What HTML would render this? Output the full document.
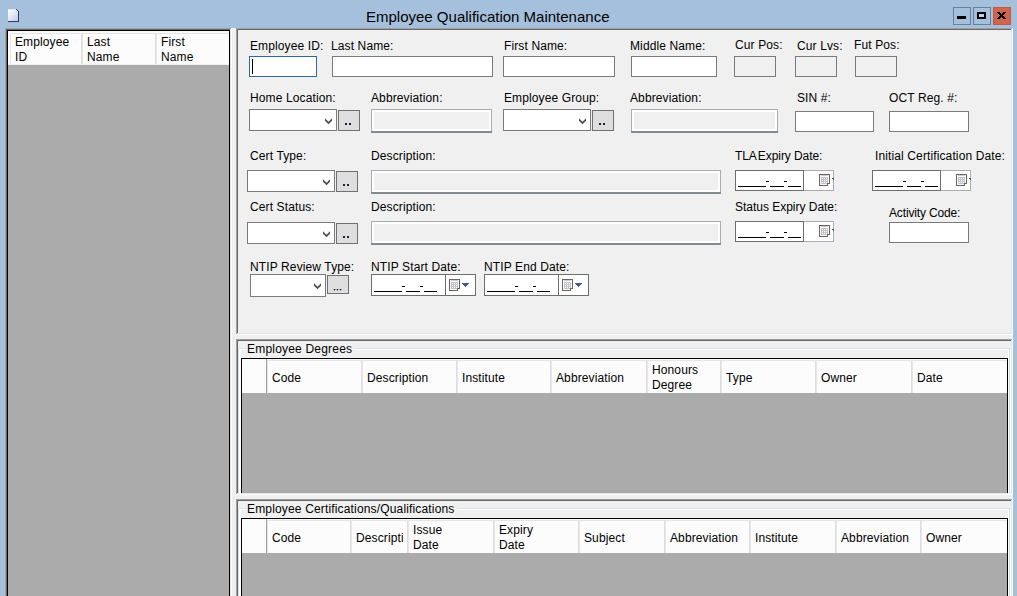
<!DOCTYPE html><html><head><meta charset="utf-8"><style>
html,body{margin:0;padding:0;width:1017px;height:596px;overflow:hidden;background:#a5c0dc;font-family:"Liberation Sans", sans-serif;}
.t{position:absolute;white-space:nowrap;line-height:14px;letter-spacing:0.12px;}
</style></head><body>
<div class="t" style="left:366px;top:7.5px;font-size:15px;line-height:18px;color:#000;letter-spacing:0">Employee Qualification Maintenance</div>
<svg style="position:absolute;left:8px;top:9px" width="11" height="13" shape-rendering="crispEdges"><defs><linearGradient id="pg" x1="0" y1="0" x2="1" y2="1"><stop offset="0" stop-color="#ffffff"/><stop offset="1" stop-color="#c3caee"/></linearGradient></defs><rect x="0" y="0" width="9" height="1" fill="#dfe8f4"/><rect x="0" y="1" width="10" height="11" fill="url(#pg)"/><rect x="10" y="2" width="1" height="11" fill="#283c5c"/><rect x="0" y="12" width="11" height="1" fill="#283c5c"/><rect x="9" y="0" width="2" height="1" fill="#a5c0dc"/><rect x="10" y="1" width="1" height="1" fill="#a5c0dc"/><rect x="8" y="0" width="1" height="1" fill="#3a4e70"/><rect x="9" y="1" width="1" height="1" fill="#283c5c"/><rect x="8" y="1" width="1" height="1" fill="#ffffff"/></svg>
<div style="position:absolute;left:953px;top:7px;width:18px;height:18px;box-sizing:border-box;border:1px solid #6b7f99;background:#a5c0dc"></div>
<div style="position:absolute;left:973px;top:7px;width:18px;height:18px;box-sizing:border-box;border:1px solid #6b7f99;background:#a5c0dc"></div>
<div style="position:absolute;left:957px;top:16px;width:9px;height:3px;background:#000"></div>
<div style="position:absolute;left:977px;top:12px;width:9px;height:7px;box-sizing:border-box;border:2px solid #000;background:#bcd2ec"></div>
<div style="position:absolute;left:993px;top:7px;width:18px;height:18px;box-sizing:border-box;border:1px solid #c9553c;background:#d0654f"></div>
<svg style="position:absolute;left:997px;top:12px" width="9" height="7" shape-rendering="crispEdges" fill="#000"><rect x="0" y="0" width="3" height="1"/><rect x="6" y="0" width="3" height="1"/><rect x="1" y="1" width="3" height="1"/><rect x="5" y="1" width="3" height="1"/><rect x="2" y="2" width="5" height="1"/><rect x="3" y="3" width="3" height="1"/><rect x="2" y="4" width="5" height="1"/><rect x="1" y="5" width="3" height="1"/><rect x="5" y="5" width="3" height="1"/><rect x="0" y="6" width="3" height="1"/><rect x="6" y="6" width="3" height="1"/></svg>
<div style="position:absolute;left:5px;top:28px;width:1008px;height:568px;background:#f0f0f0"></div>
<div style="position:absolute;left:5px;top:28px;width:227px;height:593px;background:#fff"></div>
<div style="position:absolute;left:5px;top:28px;width:226px;height:592px;background:#a0a0a0"></div>
<div style="position:absolute;left:6px;top:29px;width:225px;height:591px;background:#e3e3e3"></div>
<div style="position:absolute;left:6px;top:29px;width:224px;height:590px;background:#696969"></div>
<div style="position:absolute;left:7px;top:30px;width:223px;height:589px;background:#000"></div>
<div style="position:absolute;left:8px;top:31px;width:221px;height:565px;background:#ababab"></div>
<div style="position:absolute;left:8px;top:31px;width:221px;height:34px;background:#fafafa"></div>
<div style="position:absolute;left:10px;top:33px;width:219px;height:31px;background:#e5e5e5"></div>
<div style="position:absolute;left:11px;top:34px;width:218px;height:30px;background:#fcfcfc"></div>
<div style="position:absolute;left:8px;top:64px;width:221px;height:1px;background:#f0f0f0"></div>
<div style="position:absolute;left:81px;top:34px;width:1px;height:30px;background:#dedede"></div>
<div style="position:absolute;left:82px;top:34px;width:1px;height:30px;background:#e6e6e6"></div>
<div style="position:absolute;left:155px;top:34px;width:1px;height:30px;background:#dedede"></div>
<div style="position:absolute;left:156px;top:34px;width:1px;height:30px;background:#e6e6e6"></div>
<div class="t" style="left:15px;top:35px;font-size:12px;color:#000;line-height:15px">Employee<br>ID</div>
<div class="t" style="left:87px;top:35px;font-size:12px;color:#000;line-height:15px">Last<br>Name</div>
<div class="t" style="left:161px;top:35px;font-size:12px;color:#000;line-height:15px">First<br>Name</div>
<div style="position:absolute;left:236px;top:28px;width:777px;height:307px;background:#fff"></div>
<div style="position:absolute;left:236px;top:28px;width:776px;height:306px;background:#a0a0a0"></div>
<div style="position:absolute;left:237px;top:29px;width:775px;height:305px;background:#e3e3e3"></div>
<div style="position:absolute;left:237px;top:29px;width:774px;height:304px;background:#696969"></div>
<div style="position:absolute;left:238px;top:30px;width:773px;height:303px;background:#f0f0f0"></div>
<div class="t" style="left:250px;top:39px;font-size:12px;color:#000;">Employee ID:</div>
<div class="t" style="left:331px;top:39px;font-size:12px;color:#000;">Last Name:</div>
<div class="t" style="left:504px;top:39px;font-size:12px;color:#000;">First Name:</div>
<div class="t" style="left:630px;top:39px;font-size:12px;color:#000;">Middle Name:</div>
<div class="t" style="left:735px;top:38px;font-size:12px;color:#000;">Cur Pos:</div>
<div class="t" style="left:797px;top:39px;font-size:12px;color:#000;">Cur Lvs:</div>
<div class="t" style="left:854px;top:38px;font-size:12px;color:#000;">Fut Pos:</div>
<div class="t" style="left:250px;top:91px;font-size:12px;color:#000;">Home Location:</div>
<div class="t" style="left:371px;top:91px;font-size:12px;color:#000;">Abbreviation:</div>
<div class="t" style="left:504px;top:91px;font-size:12px;color:#000;">Employee Group:</div>
<div class="t" style="left:630px;top:91px;font-size:12px;color:#000;">Abbreviation:</div>
<div class="t" style="left:797px;top:91px;font-size:12px;color:#000;">SIN #:</div>
<div class="t" style="left:889px;top:91px;font-size:12px;color:#000;">OCT Reg. #:</div>
<div class="t" style="left:250px;top:149px;font-size:12px;color:#000;">Cert Type:</div>
<div class="t" style="left:371px;top:149px;font-size:12px;color:#000;">Description:</div>
<div class="t" style="left:735px;top:149px;font-size:12px;color:#000;"><span style="letter-spacing:-0.08px"><span style="word-spacing:-1.5px">TLA Expiry</span> Date:</span></div>
<div class="t" style="left:875px;top:149px;font-size:12px;color:#000;">Initial Certification Date:</div>
<div class="t" style="left:250px;top:200px;font-size:12px;color:#000;">Cert Status:</div>
<div class="t" style="left:371px;top:200px;font-size:12px;color:#000;">Description:</div>
<div class="t" style="left:735px;top:200px;font-size:12px;color:#000;"><span style="letter-spacing:-0.02px">Status Expiry Date:</span></div>
<div class="t" style="left:889px;top:206px;font-size:12px;color:#000;"><span style="letter-spacing:-0.15px">Activity Code:</span></div>
<div class="t" style="left:250px;top:260px;font-size:12px;color:#000;">NTIP Review Type:</div>
<div class="t" style="left:371px;top:260px;font-size:12px;color:#000;">NTIP Start Date:</div>
<div class="t" style="left:484px;top:260px;font-size:12px;color:#000;">NTIP End Date:</div>
<div style="position:absolute;left:249px;top:56px;width:68px;height:21px;box-sizing:border-box;border:1px solid #33669a;background:#fff"></div>
<div style="position:absolute;left:252px;top:59px;width:1px;height:15px;background:#000"></div>
<div style="position:absolute;left:332px;top:56px;width:161px;height:21px;box-sizing:border-box;border:1px solid #7a7a7a;background:#fff"></div>
<div style="position:absolute;left:503px;top:56px;width:112px;height:21px;box-sizing:border-box;border:1px solid #7a7a7a;background:#fff"></div>
<div style="position:absolute;left:631px;top:56px;width:86px;height:21px;box-sizing:border-box;border:1px solid #7a7a7a;background:#fff"></div>
<div style="position:absolute;left:734px;top:56px;width:42px;height:21px;box-sizing:border-box;border:1px solid #7a7a7a;background:#f0f0f0"></div>
<div style="position:absolute;left:795px;top:56px;width:42px;height:21px;box-sizing:border-box;border:1px solid #7a7a7a;background:#f0f0f0"></div>
<div style="position:absolute;left:855px;top:56px;width:42px;height:21px;box-sizing:border-box;border:1px solid #7a7a7a;background:#f0f0f0"></div>
<div style="position:absolute;left:249px;top:109px;width:88px;height:22px;box-sizing:border-box;border:1px solid #7a7a7a;background:#fff"></div>
<svg style="position:absolute;left:325px;top:118px" width="8" height="7" viewBox="0 0 8 7"><path d="M0 0.3 L3.5 3.8 L7 0.3 V2.8 L3.5 6.3 L0 2.8 Z" fill="#505050"/></svg>
<div style="position:absolute;left:338px;top:110px;width:22px;height:21px;box-sizing:border-box;border:1px solid #707070;background:#dedede"></div>
<div style="position:absolute;left:345px;top:123px;width:2px;height:2px;background:#202034"></div>
<div style="position:absolute;left:349px;top:123px;width:2px;height:2px;background:#202034"></div>
<div style="position:absolute;left:371px;top:109px;width:121px;height:24px;box-sizing:border-box;background:#a9adb2"></div>
<div style="position:absolute;left:372px;top:110px;width:119px;height:21px;background:#fff"></div>
<div style="position:absolute;left:374px;top:112px;width:115px;height:17px;background:#f0f0f0"></div>
<div style="position:absolute;left:371px;top:131px;width:121px;height:2px;background:#858a90"></div>
<div style="position:absolute;left:503px;top:109px;width:88px;height:22px;box-sizing:border-box;border:1px solid #7a7a7a;background:#fff"></div>
<svg style="position:absolute;left:579px;top:118px" width="8" height="7" viewBox="0 0 8 7"><path d="M0 0.3 L3.5 3.8 L7 0.3 V2.8 L3.5 6.3 L0 2.8 Z" fill="#505050"/></svg>
<div style="position:absolute;left:592px;top:110px;width:22px;height:21px;box-sizing:border-box;border:1px solid #707070;background:#dedede"></div>
<div style="position:absolute;left:599px;top:123px;width:2px;height:2px;background:#202034"></div>
<div style="position:absolute;left:603px;top:123px;width:2px;height:2px;background:#202034"></div>
<div style="position:absolute;left:631px;top:109px;width:147px;height:24px;box-sizing:border-box;background:#a9adb2"></div>
<div style="position:absolute;left:632px;top:110px;width:145px;height:21px;background:#fff"></div>
<div style="position:absolute;left:634px;top:112px;width:141px;height:17px;background:#f0f0f0"></div>
<div style="position:absolute;left:631px;top:131px;width:147px;height:2px;background:#858a90"></div>
<div style="position:absolute;left:795px;top:111px;width:79px;height:21px;box-sizing:border-box;border:1px solid #7a7a7a;background:#fff"></div>
<div style="position:absolute;left:889px;top:111px;width:80px;height:21px;box-sizing:border-box;border:1px solid #7a7a7a;background:#fff"></div>
<div style="position:absolute;left:247px;top:170px;width:88px;height:22px;box-sizing:border-box;border:1px solid #7a7a7a;background:#fff"></div>
<svg style="position:absolute;left:323px;top:179px" width="8" height="7" viewBox="0 0 8 7"><path d="M0 0.3 L3.5 3.8 L7 0.3 V2.8 L3.5 6.3 L0 2.8 Z" fill="#505050"/></svg>
<div style="position:absolute;left:336px;top:171px;width:22px;height:21px;box-sizing:border-box;border:1px solid #707070;background:#dedede"></div>
<div style="position:absolute;left:343px;top:184px;width:2px;height:2px;background:#202034"></div>
<div style="position:absolute;left:347px;top:184px;width:2px;height:2px;background:#202034"></div>
<div style="position:absolute;left:371px;top:170px;width:350px;height:24px;box-sizing:border-box;background:#a9adb2"></div>
<div style="position:absolute;left:372px;top:171px;width:348px;height:21px;background:#fff"></div>
<div style="position:absolute;left:374px;top:173px;width:344px;height:17px;background:#f0f0f0"></div>
<div style="position:absolute;left:371px;top:192px;width:350px;height:2px;background:#858a90"></div>
<div style="position:absolute;left:735px;top:170px;width:99px;height:21px;box-sizing:border-box;border:1px solid #a8aeb4;background:#fff"></div>
<div style="position:absolute;left:735px;top:170px;width:69px;height:21px;box-sizing:border-box;border:1px solid #6d6d6d;background:#fff"></div>
<div style="position:absolute;left:738px;top:186px;width:28px;height:1px;background:#000"></div>
<div style="position:absolute;left:766px;top:181px;width:3px;height:1px;background:#000"></div>
<div style="position:absolute;left:770px;top:186px;width:14px;height:1px;background:#000"></div>
<div style="position:absolute;left:784px;top:181px;width:3px;height:1px;background:#000"></div>
<div style="position:absolute;left:788px;top:186px;width:13px;height:1px;background:#000"></div>
<svg style="position:absolute;left:819px;top:174px" width="11" height="12" shape-rendering="crispEdges"><rect x="1" y="1" width="9" height="10" fill="#fff"/><rect x="2" y="1" width="7" height="1" fill="#c8ccd6"/><rect x="2" y="3" width="7" height="7" fill="#c0c4ce"/><rect x="3" y="4" width="1" height="1" fill="#fff"/><rect x="5" y="4" width="1" height="1" fill="#fff"/><rect x="7" y="4" width="1" height="1" fill="#fff"/><rect x="3" y="6" width="1" height="1" fill="#fff"/><rect x="5" y="6" width="1" height="1" fill="#fff"/><rect x="7" y="6" width="1" height="1" fill="#fff"/><rect x="3" y="8" width="1" height="1" fill="#fff"/><rect x="5" y="8" width="1" height="1" fill="#fff"/><rect x="7" y="8" width="1" height="1" fill="#fff"/><rect x="0" y="0" width="11" height="1" fill="#736158"/><rect x="0" y="0" width="1" height="12" fill="#736158"/><rect x="10" y="0" width="1" height="10" fill="#736158"/><rect x="8" y="9" width="3" height="1" fill="#736158"/><rect x="8" y="9" width="1" height="3" fill="#736158"/><rect x="0" y="11" width="9" height="1" fill="#736158"/><rect x="9" y="10" width="2" height="2" fill="#fff"/></svg>
<svg style="position:absolute;left:832px;top:178px" width="2" height="4" shape-rendering="crispEdges"><rect x="0" y="0" width="7" height="1" fill="#3c5a8a"/><rect x="1" y="1" width="5" height="1" fill="#3c5a8a"/><rect x="2" y="2" width="3" height="1" fill="#3c5a8a"/><rect x="3" y="3" width="1" height="1" fill="#3c5a8a"/></svg>
<div style="position:absolute;left:872px;top:170px;width:99px;height:21px;box-sizing:border-box;border:1px solid #a8aeb4;background:#fff"></div>
<div style="position:absolute;left:872px;top:170px;width:69px;height:21px;box-sizing:border-box;border:1px solid #6d6d6d;background:#fff"></div>
<div style="position:absolute;left:875px;top:186px;width:28px;height:1px;background:#000"></div>
<div style="position:absolute;left:903px;top:181px;width:3px;height:1px;background:#000"></div>
<div style="position:absolute;left:907px;top:186px;width:14px;height:1px;background:#000"></div>
<div style="position:absolute;left:921px;top:181px;width:3px;height:1px;background:#000"></div>
<div style="position:absolute;left:925px;top:186px;width:13px;height:1px;background:#000"></div>
<svg style="position:absolute;left:956px;top:174px" width="11" height="12" shape-rendering="crispEdges"><rect x="1" y="1" width="9" height="10" fill="#fff"/><rect x="2" y="1" width="7" height="1" fill="#c8ccd6"/><rect x="2" y="3" width="7" height="7" fill="#c0c4ce"/><rect x="3" y="4" width="1" height="1" fill="#fff"/><rect x="5" y="4" width="1" height="1" fill="#fff"/><rect x="7" y="4" width="1" height="1" fill="#fff"/><rect x="3" y="6" width="1" height="1" fill="#fff"/><rect x="5" y="6" width="1" height="1" fill="#fff"/><rect x="7" y="6" width="1" height="1" fill="#fff"/><rect x="3" y="8" width="1" height="1" fill="#fff"/><rect x="5" y="8" width="1" height="1" fill="#fff"/><rect x="7" y="8" width="1" height="1" fill="#fff"/><rect x="0" y="0" width="11" height="1" fill="#736158"/><rect x="0" y="0" width="1" height="12" fill="#736158"/><rect x="10" y="0" width="1" height="10" fill="#736158"/><rect x="8" y="9" width="3" height="1" fill="#736158"/><rect x="8" y="9" width="1" height="3" fill="#736158"/><rect x="0" y="11" width="9" height="1" fill="#736158"/><rect x="9" y="10" width="2" height="2" fill="#fff"/></svg>
<svg style="position:absolute;left:969px;top:178px" width="2" height="4" shape-rendering="crispEdges"><rect x="0" y="0" width="7" height="1" fill="#3c5a8a"/><rect x="1" y="1" width="5" height="1" fill="#3c5a8a"/><rect x="2" y="2" width="3" height="1" fill="#3c5a8a"/><rect x="3" y="3" width="1" height="1" fill="#3c5a8a"/></svg>
<div style="position:absolute;left:247px;top:222px;width:88px;height:22px;box-sizing:border-box;border:1px solid #7a7a7a;background:#fff"></div>
<svg style="position:absolute;left:323px;top:231px" width="8" height="7" viewBox="0 0 8 7"><path d="M0 0.3 L3.5 3.8 L7 0.3 V2.8 L3.5 6.3 L0 2.8 Z" fill="#505050"/></svg>
<div style="position:absolute;left:336px;top:223px;width:22px;height:21px;box-sizing:border-box;border:1px solid #707070;background:#dedede"></div>
<div style="position:absolute;left:343px;top:236px;width:2px;height:2px;background:#202034"></div>
<div style="position:absolute;left:347px;top:236px;width:2px;height:2px;background:#202034"></div>
<div style="position:absolute;left:371px;top:221px;width:350px;height:24px;box-sizing:border-box;background:#a9adb2"></div>
<div style="position:absolute;left:372px;top:222px;width:348px;height:21px;background:#fff"></div>
<div style="position:absolute;left:374px;top:224px;width:344px;height:17px;background:#f0f0f0"></div>
<div style="position:absolute;left:371px;top:243px;width:350px;height:2px;background:#858a90"></div>
<div style="position:absolute;left:735px;top:221px;width:99px;height:21px;box-sizing:border-box;border:1px solid #a8aeb4;background:#fff"></div>
<div style="position:absolute;left:735px;top:221px;width:69px;height:21px;box-sizing:border-box;border:1px solid #6d6d6d;background:#fff"></div>
<div style="position:absolute;left:738px;top:237px;width:28px;height:1px;background:#000"></div>
<div style="position:absolute;left:766px;top:232px;width:3px;height:1px;background:#000"></div>
<div style="position:absolute;left:770px;top:237px;width:14px;height:1px;background:#000"></div>
<div style="position:absolute;left:784px;top:232px;width:3px;height:1px;background:#000"></div>
<div style="position:absolute;left:788px;top:237px;width:13px;height:1px;background:#000"></div>
<svg style="position:absolute;left:819px;top:225px" width="11" height="12" shape-rendering="crispEdges"><rect x="1" y="1" width="9" height="10" fill="#fff"/><rect x="2" y="1" width="7" height="1" fill="#c8ccd6"/><rect x="2" y="3" width="7" height="7" fill="#c0c4ce"/><rect x="3" y="4" width="1" height="1" fill="#fff"/><rect x="5" y="4" width="1" height="1" fill="#fff"/><rect x="7" y="4" width="1" height="1" fill="#fff"/><rect x="3" y="6" width="1" height="1" fill="#fff"/><rect x="5" y="6" width="1" height="1" fill="#fff"/><rect x="7" y="6" width="1" height="1" fill="#fff"/><rect x="3" y="8" width="1" height="1" fill="#fff"/><rect x="5" y="8" width="1" height="1" fill="#fff"/><rect x="7" y="8" width="1" height="1" fill="#fff"/><rect x="0" y="0" width="11" height="1" fill="#736158"/><rect x="0" y="0" width="1" height="12" fill="#736158"/><rect x="10" y="0" width="1" height="10" fill="#736158"/><rect x="8" y="9" width="3" height="1" fill="#736158"/><rect x="8" y="9" width="1" height="3" fill="#736158"/><rect x="0" y="11" width="9" height="1" fill="#736158"/><rect x="9" y="10" width="2" height="2" fill="#fff"/></svg>
<svg style="position:absolute;left:832px;top:229px" width="2" height="4" shape-rendering="crispEdges"><rect x="0" y="0" width="7" height="1" fill="#3c5a8a"/><rect x="1" y="1" width="5" height="1" fill="#3c5a8a"/><rect x="2" y="2" width="3" height="1" fill="#3c5a8a"/><rect x="3" y="3" width="1" height="1" fill="#3c5a8a"/></svg>
<div style="position:absolute;left:889px;top:222px;width:80px;height:21px;box-sizing:border-box;border:1px solid #7a7a7a;background:#fff"></div>
<div style="position:absolute;left:250px;top:274px;width:76px;height:23px;box-sizing:border-box;border:1px solid #7a7a7a;background:#fff"></div>
<svg style="position:absolute;left:314px;top:283px" width="8" height="7" viewBox="0 0 8 7"><path d="M0 0.3 L3.5 3.8 L7 0.3 V2.8 L3.5 6.3 L0 2.8 Z" fill="#505050"/></svg>
<div style="position:absolute;left:327px;top:275px;width:22px;height:19px;box-sizing:border-box;border:1px solid #707070;background:#dedede"></div>
<div style="position:absolute;left:334px;top:289px;width:1px;height:1px;background:#1a1a3a"></div>
<div style="position:absolute;left:333px;top:289px;width:1px;height:1px;background:#b0a090"></div>
<div style="position:absolute;left:335px;top:289px;width:1px;height:1px;background:#90a8c0"></div>
<div style="position:absolute;left:334px;top:290px;width:1px;height:1px;background:#9090a0"></div>
<div style="position:absolute;left:337px;top:289px;width:1px;height:1px;background:#1a1a3a"></div>
<div style="position:absolute;left:336px;top:289px;width:1px;height:1px;background:#b0a090"></div>
<div style="position:absolute;left:338px;top:289px;width:1px;height:1px;background:#90a8c0"></div>
<div style="position:absolute;left:337px;top:290px;width:1px;height:1px;background:#9090a0"></div>
<div style="position:absolute;left:340px;top:289px;width:1px;height:1px;background:#1a1a3a"></div>
<div style="position:absolute;left:339px;top:289px;width:1px;height:1px;background:#b0a090"></div>
<div style="position:absolute;left:341px;top:289px;width:1px;height:1px;background:#90a8c0"></div>
<div style="position:absolute;left:340px;top:290px;width:1px;height:1px;background:#9090a0"></div>
<div style="position:absolute;left:371px;top:274px;width:105px;height:22px;box-sizing:border-box;border:1px solid #6d6d6d;background:#fff"></div>
<div style="position:absolute;left:371px;top:274px;width:75px;height:22px;box-sizing:border-box;border:1px solid #6d6d6d;background:#fff"></div>
<div style="position:absolute;left:374px;top:291px;width:28px;height:1px;background:#000"></div>
<div style="position:absolute;left:402px;top:286px;width:3px;height:1px;background:#000"></div>
<div style="position:absolute;left:406px;top:291px;width:14px;height:1px;background:#000"></div>
<div style="position:absolute;left:420px;top:286px;width:3px;height:1px;background:#000"></div>
<div style="position:absolute;left:424px;top:291px;width:13px;height:1px;background:#000"></div>
<svg style="position:absolute;left:449px;top:279px" width="11" height="12" shape-rendering="crispEdges"><rect x="1" y="1" width="9" height="10" fill="#fff"/><rect x="2" y="1" width="7" height="1" fill="#c8ccd6"/><rect x="2" y="3" width="7" height="7" fill="#c0c4ce"/><rect x="3" y="4" width="1" height="1" fill="#fff"/><rect x="5" y="4" width="1" height="1" fill="#fff"/><rect x="7" y="4" width="1" height="1" fill="#fff"/><rect x="3" y="6" width="1" height="1" fill="#fff"/><rect x="5" y="6" width="1" height="1" fill="#fff"/><rect x="7" y="6" width="1" height="1" fill="#fff"/><rect x="3" y="8" width="1" height="1" fill="#fff"/><rect x="5" y="8" width="1" height="1" fill="#fff"/><rect x="7" y="8" width="1" height="1" fill="#fff"/><rect x="0" y="0" width="11" height="1" fill="#736158"/><rect x="0" y="0" width="1" height="12" fill="#736158"/><rect x="10" y="0" width="1" height="10" fill="#736158"/><rect x="8" y="9" width="3" height="1" fill="#736158"/><rect x="8" y="9" width="1" height="3" fill="#736158"/><rect x="0" y="11" width="9" height="1" fill="#736158"/><rect x="9" y="10" width="2" height="2" fill="#fff"/></svg>
<svg style="position:absolute;left:462px;top:283px" width="7" height="4" shape-rendering="crispEdges"><rect x="0" y="0" width="7" height="1" fill="#3c5a8a"/><rect x="1" y="1" width="5" height="1" fill="#3c5a8a"/><rect x="2" y="2" width="3" height="1" fill="#3c5a8a"/><rect x="3" y="3" width="1" height="1" fill="#3c5a8a"/></svg>
<div style="position:absolute;left:484px;top:274px;width:105px;height:22px;box-sizing:border-box;border:1px solid #6d6d6d;background:#fff"></div>
<div style="position:absolute;left:484px;top:274px;width:75px;height:22px;box-sizing:border-box;border:1px solid #6d6d6d;background:#fff"></div>
<div style="position:absolute;left:487px;top:291px;width:28px;height:1px;background:#000"></div>
<div style="position:absolute;left:515px;top:286px;width:3px;height:1px;background:#000"></div>
<div style="position:absolute;left:519px;top:291px;width:14px;height:1px;background:#000"></div>
<div style="position:absolute;left:533px;top:286px;width:3px;height:1px;background:#000"></div>
<div style="position:absolute;left:537px;top:291px;width:13px;height:1px;background:#000"></div>
<svg style="position:absolute;left:562px;top:279px" width="11" height="12" shape-rendering="crispEdges"><rect x="1" y="1" width="9" height="10" fill="#fff"/><rect x="2" y="1" width="7" height="1" fill="#c8ccd6"/><rect x="2" y="3" width="7" height="7" fill="#c0c4ce"/><rect x="3" y="4" width="1" height="1" fill="#fff"/><rect x="5" y="4" width="1" height="1" fill="#fff"/><rect x="7" y="4" width="1" height="1" fill="#fff"/><rect x="3" y="6" width="1" height="1" fill="#fff"/><rect x="5" y="6" width="1" height="1" fill="#fff"/><rect x="7" y="6" width="1" height="1" fill="#fff"/><rect x="3" y="8" width="1" height="1" fill="#fff"/><rect x="5" y="8" width="1" height="1" fill="#fff"/><rect x="7" y="8" width="1" height="1" fill="#fff"/><rect x="0" y="0" width="11" height="1" fill="#736158"/><rect x="0" y="0" width="1" height="12" fill="#736158"/><rect x="10" y="0" width="1" height="10" fill="#736158"/><rect x="8" y="9" width="3" height="1" fill="#736158"/><rect x="8" y="9" width="1" height="3" fill="#736158"/><rect x="0" y="11" width="9" height="1" fill="#736158"/><rect x="9" y="10" width="2" height="2" fill="#fff"/></svg>
<svg style="position:absolute;left:575px;top:283px" width="7" height="4" shape-rendering="crispEdges"><rect x="0" y="0" width="7" height="1" fill="#3c5a8a"/><rect x="1" y="1" width="5" height="1" fill="#3c5a8a"/><rect x="2" y="2" width="3" height="1" fill="#3c5a8a"/><rect x="3" y="3" width="1" height="1" fill="#3c5a8a"/></svg>
<div style="position:absolute;left:236px;top:339px;width:777px;height:156px;background:#fff"></div>
<div style="position:absolute;left:236px;top:339px;width:776px;height:155px;background:#a0a0a0"></div>
<div style="position:absolute;left:237px;top:340px;width:775px;height:154px;background:#e3e3e3"></div>
<div style="position:absolute;left:237px;top:340px;width:774px;height:153px;background:#696969"></div>
<div style="position:absolute;left:238px;top:341px;width:773px;height:152px;background:#f0f0f0"></div>
<div style="position:absolute;left:238px;top:349px;width:1px;height:145px;background:#d5dfe8"></div>
<div style="position:absolute;left:239px;top:349px;width:2px;height:145px;background:#fff"></div>
<div style="position:absolute;left:239px;top:348px;width:7px;height:1px;background:#d5dfe8"></div>
<div style="position:absolute;left:240px;top:349px;width:6px;height:1px;background:#fff"></div>
<div style="position:absolute;left:355px;top:348px;width:655px;height:1px;background:#d5dfe8"></div>
<div style="position:absolute;left:355px;top:349px;width:654px;height:1px;background:#fff"></div>
<div style="position:absolute;left:1009px;top:348px;width:1px;height:145px;background:#d5dfe8"></div>
<div style="position:absolute;left:1008px;top:349px;width:1px;height:145px;background:#fff"></div>
<div style="position:absolute;left:1010px;top:349px;width:1px;height:145px;background:#fff"></div>
<div class="t" style="left:247px;top:342px;font-size:12px;color:#000;letter-spacing:0.2px">Employee Degrees</div>
<div style="position:absolute;left:241px;top:358px;width:767px;height:135px;background:#000"></div>
<div style="position:absolute;left:242px;top:359px;width:765px;height:134px;background:#ababab"></div>
<div style="position:absolute;left:242px;top:359px;width:765px;height:34px;background:#fcfcfc"></div>
<div style="position:absolute;left:242px;top:360px;width:765px;height:1px;background:#e5e5e5"></div>
<div style="position:absolute;left:266px;top:359px;width:1px;height:34px;background:#a0a0a0"></div>
<div style="position:absolute;left:242px;top:359px;width:24px;height:34px;background:#fcfcfc"></div>
<div style="position:absolute;left:266px;top:359px;width:1px;height:34px;background:#a0a0a0"></div>
<div style="position:absolute;left:267px;top:360px;width:1px;height:33px;background:#e5e5e5"></div>
<div style="position:absolute;left:361px;top:361px;width:1px;height:32px;background:#dedede"></div>
<div style="position:absolute;left:362px;top:361px;width:1px;height:32px;background:#e6e6e6"></div>
<div style="position:absolute;left:456px;top:361px;width:1px;height:32px;background:#dedede"></div>
<div style="position:absolute;left:457px;top:361px;width:1px;height:32px;background:#e6e6e6"></div>
<div style="position:absolute;left:550px;top:361px;width:1px;height:32px;background:#dedede"></div>
<div style="position:absolute;left:551px;top:361px;width:1px;height:32px;background:#e6e6e6"></div>
<div style="position:absolute;left:646px;top:361px;width:1px;height:32px;background:#dedede"></div>
<div style="position:absolute;left:647px;top:361px;width:1px;height:32px;background:#e6e6e6"></div>
<div style="position:absolute;left:720px;top:361px;width:1px;height:32px;background:#dedede"></div>
<div style="position:absolute;left:721px;top:361px;width:1px;height:32px;background:#e6e6e6"></div>
<div style="position:absolute;left:815px;top:361px;width:1px;height:32px;background:#dedede"></div>
<div style="position:absolute;left:816px;top:361px;width:1px;height:32px;background:#e6e6e6"></div>
<div style="position:absolute;left:911px;top:361px;width:1px;height:32px;background:#dedede"></div>
<div style="position:absolute;left:912px;top:361px;width:1px;height:32px;background:#e6e6e6"></div>
<div class="t" style="left:272px;top:371px;font-size:12px;color:#000;">Code</div>
<div class="t" style="left:367px;top:371px;font-size:12px;color:#000;">Description</div>
<div class="t" style="left:462px;top:371px;font-size:12px;color:#000;">Institute</div>
<div class="t" style="left:556px;top:371px;font-size:12px;color:#000;">Abbreviation</div>
<div class="t" style="left:652px;top:363px;font-size:12px;color:#000;line-height:15px">Honours<br>Degree</div>
<div class="t" style="left:726px;top:371px;font-size:12px;color:#000;">Type</div>
<div class="t" style="left:821px;top:371px;font-size:12px;color:#000;">Owner</div>
<div class="t" style="left:917px;top:371px;font-size:12px;color:#000;">Date</div>
<div style="position:absolute;left:236px;top:499px;width:777px;height:122px;background:#fff"></div>
<div style="position:absolute;left:236px;top:499px;width:776px;height:121px;background:#a0a0a0"></div>
<div style="position:absolute;left:237px;top:500px;width:775px;height:120px;background:#e3e3e3"></div>
<div style="position:absolute;left:237px;top:500px;width:774px;height:119px;background:#696969"></div>
<div style="position:absolute;left:238px;top:501px;width:773px;height:118px;background:#f0f0f0"></div>
<div style="position:absolute;left:238px;top:509px;width:1px;height:111px;background:#d5dfe8"></div>
<div style="position:absolute;left:239px;top:509px;width:2px;height:111px;background:#fff"></div>
<div style="position:absolute;left:239px;top:508px;width:7px;height:1px;background:#d5dfe8"></div>
<div style="position:absolute;left:240px;top:509px;width:6px;height:1px;background:#fff"></div>
<div style="position:absolute;left:457px;top:508px;width:553px;height:1px;background:#d5dfe8"></div>
<div style="position:absolute;left:457px;top:509px;width:552px;height:1px;background:#fff"></div>
<div style="position:absolute;left:1009px;top:508px;width:1px;height:111px;background:#d5dfe8"></div>
<div style="position:absolute;left:1008px;top:509px;width:1px;height:111px;background:#fff"></div>
<div style="position:absolute;left:1010px;top:509px;width:1px;height:111px;background:#fff"></div>
<div class="t" style="left:247px;top:502px;font-size:12px;color:#000;letter-spacing:0.16px">Employee Certifications/Qualifications</div>
<div style="position:absolute;left:241px;top:518px;width:767px;height:101px;background:#000"></div>
<div style="position:absolute;left:242px;top:519px;width:765px;height:100px;background:#ababab"></div>
<div style="position:absolute;left:242px;top:519px;width:765px;height:34px;background:#fcfcfc"></div>
<div style="position:absolute;left:242px;top:520px;width:765px;height:1px;background:#e5e5e5"></div>
<div style="position:absolute;left:266px;top:519px;width:1px;height:34px;background:#a0a0a0"></div>
<div style="position:absolute;left:242px;top:519px;width:24px;height:34px;background:#fcfcfc"></div>
<div style="position:absolute;left:266px;top:519px;width:1px;height:34px;background:#a0a0a0"></div>
<div style="position:absolute;left:267px;top:520px;width:1px;height:33px;background:#e5e5e5"></div>
<div style="position:absolute;left:350px;top:521px;width:1px;height:32px;background:#dedede"></div>
<div style="position:absolute;left:351px;top:521px;width:1px;height:32px;background:#e6e6e6"></div>
<div style="position:absolute;left:407px;top:521px;width:1px;height:32px;background:#dedede"></div>
<div style="position:absolute;left:408px;top:521px;width:1px;height:32px;background:#e6e6e6"></div>
<div style="position:absolute;left:493px;top:521px;width:1px;height:32px;background:#dedede"></div>
<div style="position:absolute;left:494px;top:521px;width:1px;height:32px;background:#e6e6e6"></div>
<div style="position:absolute;left:578px;top:521px;width:1px;height:32px;background:#dedede"></div>
<div style="position:absolute;left:579px;top:521px;width:1px;height:32px;background:#e6e6e6"></div>
<div style="position:absolute;left:664px;top:521px;width:1px;height:32px;background:#dedede"></div>
<div style="position:absolute;left:665px;top:521px;width:1px;height:32px;background:#e6e6e6"></div>
<div style="position:absolute;left:749px;top:521px;width:1px;height:32px;background:#dedede"></div>
<div style="position:absolute;left:750px;top:521px;width:1px;height:32px;background:#e6e6e6"></div>
<div style="position:absolute;left:835px;top:521px;width:1px;height:32px;background:#dedede"></div>
<div style="position:absolute;left:836px;top:521px;width:1px;height:32px;background:#e6e6e6"></div>
<div style="position:absolute;left:920px;top:521px;width:1px;height:32px;background:#dedede"></div>
<div style="position:absolute;left:921px;top:521px;width:1px;height:32px;background:#e6e6e6"></div>
<div class="t" style="left:272px;top:531px;font-size:12px;color:#000;">Code</div>
<div class="t" style="left:356px;top:531px;font-size:12px;color:#000;"><span style="display:inline-block;width:47px;overflow:hidden;vertical-align:top">Description</span></div>
<div class="t" style="left:413px;top:523px;font-size:12px;color:#000;line-height:15px">Issue<br>Date</div>
<div class="t" style="left:499px;top:523px;font-size:12px;color:#000;line-height:15px">Expiry<br>Date</div>
<div class="t" style="left:584px;top:531px;font-size:12px;color:#000;">Subject</div>
<div class="t" style="left:670px;top:531px;font-size:12px;color:#000;">Abbreviation</div>
<div class="t" style="left:755px;top:531px;font-size:12px;color:#000;">Institute</div>
<div class="t" style="left:841px;top:531px;font-size:12px;color:#000;">Abbreviation</div>
<div class="t" style="left:926px;top:531px;font-size:12px;color:#000;">Owner</div>
</body></html>
